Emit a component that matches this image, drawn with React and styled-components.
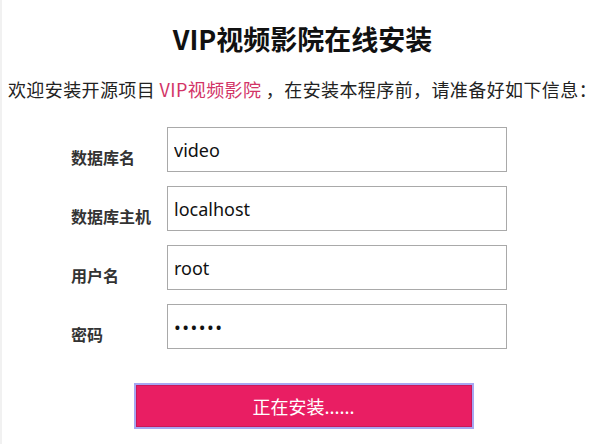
import React from "react";
import styled, { createGlobalStyle } from "styled-components";

const Global = createGlobalStyle`
  html, body { margin: 0; padding: 0; background: #fff; }
  body { font-family: "Noto Sans CJK SC", "Noto Sans", sans-serif; }
  * { box-sizing: border-box; }
`;

const Page = styled.div`
  width: 603px;
  height: 444px;
  border-left: 2px solid #f1f1f1;
  overflow: hidden;
  padding-top: 25px;
`;

const Title = styled.h1`
  margin: 0;
  font-size: 27px;
  line-height: 28px;
  font-weight: 700;
  color: #111;
  text-align: center;
`;

const Intro = styled.p`
  margin: 27px 0 0;
  font-size: 18px;
  line-height: 18px;
  letter-spacing: 0.4px;
  color: #222;
  text-align: center;
  white-space: nowrap;
`;

const Brand = styled.span`
  color: #d23467;
`;

const Form = styled.form`
  margin-top: 29px;
  padding-left: 69px;
  display: flex;
  flex-direction: column;
  gap: 14px;
`;

const Row = styled.div`
  display: flex;
  align-items: flex-start;
`;

const Label = styled.label`
  width: 96px;
  padding-top: 22px;
  font-size: 16px;
  line-height: 16px;
  font-weight: 700;
  color: #333;
`;

const Input = styled.input`
  width: 340px;
  height: 45px;
  border: 1px solid #a9a9a9;
  padding: 0 6px;
  font-family: "Noto Sans", "Noto Sans CJK SC", sans-serif;
  font-size: 18px;
  letter-spacing: ${(p) => (p.type === "password" ? "1.5px" : "0")};
  color: #111;
  background: #fff;
  outline: none;
`;

const Submit = styled.button`
  display: block;
  margin: 34px auto 0;
  width: 340px;
  height: 46px;
  border: 2px solid #a7a7f2;
  background: #e91e63;
  box-shadow: inset 0 0 0 1px #c9185a;
  color: #fff;
  font-family: "Noto Sans CJK SC", "Noto Sans", sans-serif;
  font-size: 18px;
  line-height: 18px;
  cursor: pointer;
  position: relative;
  left: 1px;
`;

const fields = [
  { label: "数据库名", value: "video", type: "text" },
  { label: "数据库主机", value: "localhost", type: "text" },
  { label: "用户名", value: "root", type: "text" },
  { label: "密码", value: "123456", type: "password" },
];

export default function App() {
  return (
    <>
      <Global />
      <Page>
        <Title>VIP视频影院在线安装</Title>
        <Intro>
          欢迎安装开源项目 <Brand>VIP视频影院</Brand> ，在安装本程序前，请准备好如下信息：
        </Intro>
        <Form onSubmit={(e) => e.preventDefault()}>
          {fields.map((f) => (
            <Row key={f.label}>
              <Label>{f.label}</Label>
              <Input type={f.type} defaultValue={f.value} readOnly />
            </Row>
          ))}
        </Form>
        <Submit type="button">正在安装......</Submit>
      </Page>
    </>
  );
}
